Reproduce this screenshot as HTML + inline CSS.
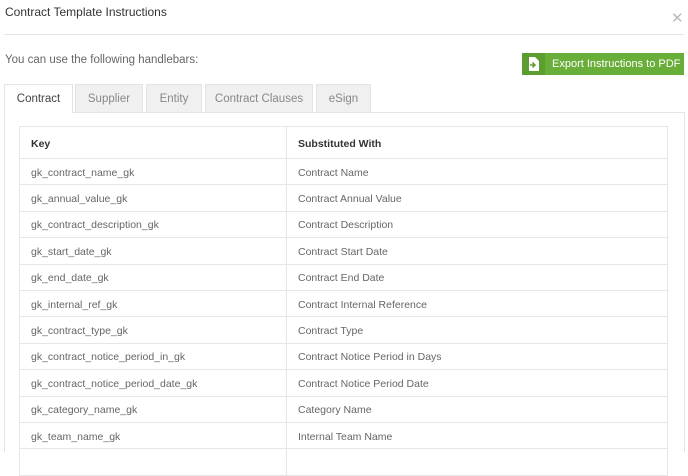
<!DOCTYPE html>
<html><head><style>
*{margin:0;padding:0;box-sizing:border-box}
body{width:688px;height:450px;overflow:hidden;background:#fff;font-family:"Liberation Sans",sans-serif;color:#555;position:relative}
.abs{position:absolute}
.title{left:5px;top:5px;font-size:12px;color:#333}
.close{left:671px;top:9px;font-size:15px;color:#bbb}
.hr{left:4px;top:34px;width:680px;height:1px;background:#e5e5e5}
.hb{left:5px;top:54px;font-size:11.5px;color:#666}
.btn{left:522px;top:53px;width:162px;height:22px;background:#6aae3a;color:#fff;font-size:11px;line-height:22px;white-space:nowrap}
.btn .ic{position:absolute;left:0;top:0;width:23px;height:22px;background:#5b9d2e}
.btn span{position:absolute;left:30px}
.tab{top:84px;height:28px;background:#f0f0f0;border:1px solid #e4e4e4;border-bottom:none;font-size:11.5px;color:#888;text-align:center;line-height:28px;white-space:nowrap}
.tab.on{background:#fff;color:#444;height:29px;z-index:2}
.panel{left:4px;top:112px;width:681px;height:340px;border:1px solid #e4e4e4;border-bottom:none}
table{position:absolute;left:19px;top:126px;width:649px;border-collapse:collapse;font-size:10.5px;color:#666}
td{border:1px solid #e6e6e6;height:26.4px;padding-left:11px;vertical-align:middle;padding-top:2px}
td:first-child{width:267px}
tr.h td{height:32px;font-weight:bold;color:#333}
</style></head><body>
<div class="abs title">Contract Template Instructions</div>
<div class="abs close">✕</div>
<div class="abs hr"></div>
<div class="abs hb">You can use the following handlebars:</div>
<div class="abs btn"><div class="ic"><svg width="23" height="22" viewBox="0 0 23 22"><path d="M7 4h6l4 4v10H7z" fill="#fff"/><path d="M8 12h4.5M10.5 9.5l2.5 2.5-2.5 2.5" stroke="#5b9d2e" stroke-width="1.5" fill="none"/></svg></div><span>Export Instructions to PDF</span></div>
<div class="abs panel"></div>
<div class="abs tab on" style="left:4px;width:69px">Contract</div>
<div class="abs tab" style="left:75px;width:68px">Supplier</div>
<div class="abs tab" style="left:146px;width:56px">Entity</div>
<div class="abs tab" style="left:205px;width:108px">Contract Clauses</div>
<div class="abs tab" style="left:316px;width:55px">eSign</div>
<table>
<tr class="h"><td>Key</td><td>Substituted With</td></tr>
<tr><td>gk_contract_name_gk</td><td>Contract Name</td></tr>
<tr><td>gk_annual_value_gk</td><td>Contract Annual Value</td></tr>
<tr><td>gk_contract_description_gk</td><td>Contract Description</td></tr>
<tr><td>gk_start_date_gk</td><td>Contract Start Date</td></tr>
<tr><td>gk_end_date_gk</td><td>Contract End Date</td></tr>
<tr><td>gk_internal_ref_gk</td><td>Contract Internal Reference</td></tr>
<tr><td>gk_contract_type_gk</td><td>Contract Type</td></tr>
<tr><td>gk_contract_notice_period_in_gk</td><td>Contract Notice Period in Days</td></tr>
<tr><td>gk_contract_notice_period_date_gk</td><td>Contract Notice Period Date</td></tr>
<tr><td>gk_category_name_gk</td><td>Category Name</td></tr>
<tr><td>gk_team_name_gk</td><td>Internal Team Name</td></tr>
<tr><td>&nbsp;</td><td>&nbsp;</td></tr>
</table>
</body></html>
